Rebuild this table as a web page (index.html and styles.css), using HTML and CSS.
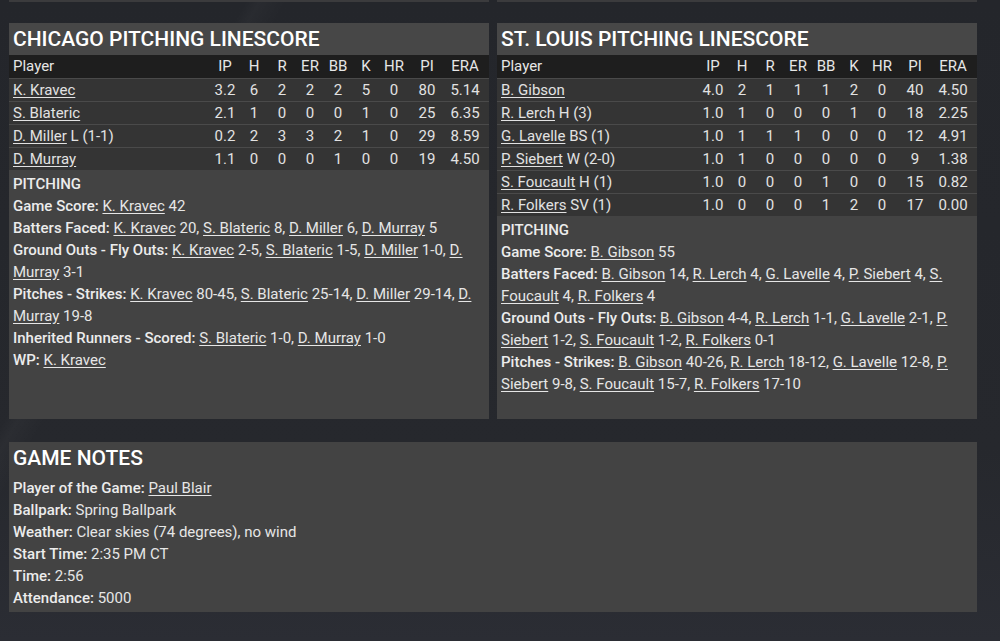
FILE: index.html
```html
<!DOCTYPE html>
<html lang="en">
<head>
<meta charset="utf-8">
<title>Pitching Linescore</title>
<link rel="stylesheet" href="styles.css">
</head>
<body>
<div class="page">
  <div class="prev-row"><div class="prev"></div><div class="prev"></div></div>

  <div class="panels">
    <section class="panel">
      <h2 class="panel-title">CHICAGO PITCHING LINESCORE</h2>
      <div class="line-table">
        <div class="row head"><span class="name">Player</span><span>IP</span><span>H</span><span>R</span><span>ER</span><span>BB</span><span>K</span><span>HR</span><span>PI</span><span>ERA</span></div>
        <div class="row"><span class="name"><a href="#">K. Kravec</a></span><span>3.2</span><span>6</span><span>2</span><span>2</span><span>2</span><span>5</span><span>0</span><span>80</span><span>5.14</span></div>
        <div class="row"><span class="name"><a href="#">S. Blateric</a></span><span>2.1</span><span>1</span><span>0</span><span>0</span><span>0</span><span>1</span><span>0</span><span>25</span><span>6.35</span></div>
        <div class="row"><span class="name"><a href="#">D. Miller</a> L (1-1)</span><span>0.2</span><span>2</span><span>3</span><span>3</span><span>2</span><span>1</span><span>0</span><span>29</span><span>8.59</span></div>
        <div class="row"><span class="name"><a href="#">D. Murray</a></span><span>1.1</span><span>0</span><span>0</span><span>0</span><span>1</span><span>0</span><span>0</span><span>19</span><span>4.50</span></div>
      </div>
      <div class="notes">
        <div class="notes-head">PITCHING</div>
        <p><b>Game Score:</b> <a href="#">K. Kravec</a> 42</p>
        <p><b>Batters Faced:</b> <a href="#">K. Kravec</a> 20, <a href="#">S. Blateric</a> 8, <a href="#">D. Miller</a> 6, <a href="#">D. Murray</a> 5</p>
        <p><b>Ground Outs - Fly Outs:</b> <a href="#">K. Kravec</a> 2-5, <a href="#">S. Blateric</a> 1-5, <a href="#">D. Miller</a> 1-0, <a href="#">D. Murray</a> 3-1</p>
        <p><b>Pitches - Strikes:</b> <a href="#">K. Kravec</a> 80-45, <a href="#">S. Blateric</a> 25-14, <a href="#">D. Miller</a> 29-14, <a href="#">D. Murray</a> 19-8</p>
        <p><b>Inherited Runners - Scored:</b> <a href="#">S. Blateric</a> 1-0, <a href="#">D. Murray</a> 1-0</p>
        <p><b>WP:</b> <a href="#">K. Kravec</a></p>
      </div>
    </section>

    <section class="panel">
      <h2 class="panel-title">ST. LOUIS PITCHING LINESCORE</h2>
      <div class="line-table">
        <div class="row head"><span class="name">Player</span><span>IP</span><span>H</span><span>R</span><span>ER</span><span>BB</span><span>K</span><span>HR</span><span>PI</span><span>ERA</span></div>
        <div class="row"><span class="name"><a href="#">B. Gibson</a></span><span>4.0</span><span>2</span><span>1</span><span>1</span><span>1</span><span>2</span><span>0</span><span>40</span><span>4.50</span></div>
        <div class="row"><span class="name"><a href="#">R. Lerch</a> H (3)</span><span>1.0</span><span>1</span><span>0</span><span>0</span><span>0</span><span>1</span><span>0</span><span>18</span><span>2.25</span></div>
        <div class="row"><span class="name"><a href="#">G. Lavelle</a> BS (1)</span><span>1.0</span><span>1</span><span>1</span><span>1</span><span>0</span><span>0</span><span>0</span><span>12</span><span>4.91</span></div>
        <div class="row"><span class="name"><a href="#">P. Siebert</a> W (2-0)</span><span>1.0</span><span>1</span><span>0</span><span>0</span><span>0</span><span>0</span><span>0</span><span>9</span><span>1.38</span></div>
        <div class="row"><span class="name"><a href="#">S. Foucault</a> H (1)</span><span>1.0</span><span>0</span><span>0</span><span>0</span><span>1</span><span>0</span><span>0</span><span>15</span><span>0.82</span></div>
        <div class="row"><span class="name"><a href="#">R. Folkers</a> SV (1)</span><span>1.0</span><span>0</span><span>0</span><span>0</span><span>1</span><span>2</span><span>0</span><span>17</span><span>0.00</span></div>
      </div>
      <div class="notes">
        <div class="notes-head">PITCHING</div>
        <p><b>Game Score:</b> <a href="#">B. Gibson</a> 55</p>
        <p><b>Batters Faced:</b> <a href="#">B. Gibson</a> 14, <a href="#">R. Lerch</a> 4, <a href="#">G. Lavelle</a> 4, <a href="#">P. Siebert</a> 4, <a href="#">S. Foucault</a> 4, <a href="#">R. Folkers</a> 4</p>
        <p><b>Ground Outs - Fly Outs:</b> <a href="#">B. Gibson</a> 4-4, <a href="#">R. Lerch</a> 1-1, <a href="#">G. Lavelle</a> 2-1, <a href="#">P. Siebert</a> 1-2, <a href="#">S. Foucault</a> 1-2, <a href="#">R. Folkers</a> 0-1</p>
        <p><b>Pitches - Strikes:</b> <a href="#">B. Gibson</a> 40-26, <a href="#">R. Lerch</a> 18-12, <a href="#">G. Lavelle</a> 12-8, <a href="#">P. Siebert</a> 9-8, <a href="#">S. Foucault</a> 15-7, <a href="#">R. Folkers</a> 17-10</p>
      </div>
    </section>
  </div>

  <section class="game-notes">
    <h2 class="gn-title">GAME NOTES</h2>
    <div class="gn-body">
      <p><b>Player of the Game:</b> <a href="#">Paul Blair</a></p>
      <p><b>Ballpark:</b> Spring Ballpark</p>
      <p><b>Weather:</b> Clear skies (74 degrees), no wind</p>
      <p><b>Start Time:</b> 2:35 PM CT</p>
      <p><b>Time:</b> 2:56</p>
      <p><b>Attendance:</b> 5000</p>
    </div>
  </section>
</div>
</body>
</html>
```

FILE: styles.css
```css
html, body {
  margin: 0;
  padding: 0;
}

body {
  width: 1000px;
  height: 641px;
  overflow: hidden;
  background-color: #25272c;
  background-image:
    linear-gradient(120deg, rgba(255,255,255,0) 0%, rgba(255,255,255,0) 18%, rgba(255,255,255,0.025) 19%, rgba(255,255,255,0) 21%, rgba(255,255,255,0) 100%),
    linear-gradient(180deg, #24262b 0%, #26282d 70%, #2b2d34 100%);
  font-family: Roboto, "Liberation Sans", Arial, sans-serif;
  color: #e6e6e6;
  font-size: 15px;
}

.page {
  padding: 0 23px 0 9px;
}

.prev-row {
  display: grid;
  grid-template-columns: 480px 480px;
  column-gap: 8px;
  margin-bottom: 21px;
}

.prev {
  height: 2px;
  background: #3b3b3d;
}

.panels {
  display: grid;
  grid-template-columns: 480px 480px;
  column-gap: 8px;
  height: 396px;
}

.panel {
  display: flex;
  flex-direction: column;
  min-height: 0;
}

.panel-title {
  margin: 0;
  height: 32px;
  line-height: 32px;
  padding: 0 4px;
  background: #474747;
  color: #ffffff;
  font-size: 21px;
  font-weight: 500;
}

.line-table {
  display: flex;
  flex-direction: column;
}

.row {
  display: grid;
  grid-template-columns: 1fr 30px 28px 28px 28px 28px 28px 28px 38px 38px;
  padding: 0 5px 0 4px;
  height: 22px;
  line-height: 22px;
  border-top: 1px solid #4a4a4a;
  background: #343434;
  font-size: 15px;
  color: #e2e2e2;
}

.row span {
  text-align: center;
  white-space: nowrap;
}

.row span.name {
  text-align: left;
}

.row.head {
  height: 23px;
  line-height: 23px;
  border-top: 0;
  background: #1e1e1e;
  color: #e6e6e6;
}

a {
  color: inherit;
  text-decoration: underline;
  text-underline-offset: 2px;
}

.notes {
  flex: 1;
  background: #434343;
  padding: 3px 4px 0 4px;
}

.notes-head {
  line-height: 22px;
  font-weight: 500;
  color: #ececec;
}

.notes p,
.gn-body p {
  margin: 0;
  line-height: 22px;
  color: #e6e6e6;
}

.notes b,
.gn-body b {
  font-weight: 500;
  color: #ececec;
}

.game-notes {
  margin-top: 23px;
  width: 968px;
  background: #434343;
  padding: 0 4px 3px 4px;
  box-sizing: border-box;
}

.gn-title {
  margin: 0;
  height: 32px;
  line-height: 32px;
  font-size: 21px;
  font-weight: 500;
  color: #ffffff;
}

.gn-body {
  padding-top: 3px;
}
```
